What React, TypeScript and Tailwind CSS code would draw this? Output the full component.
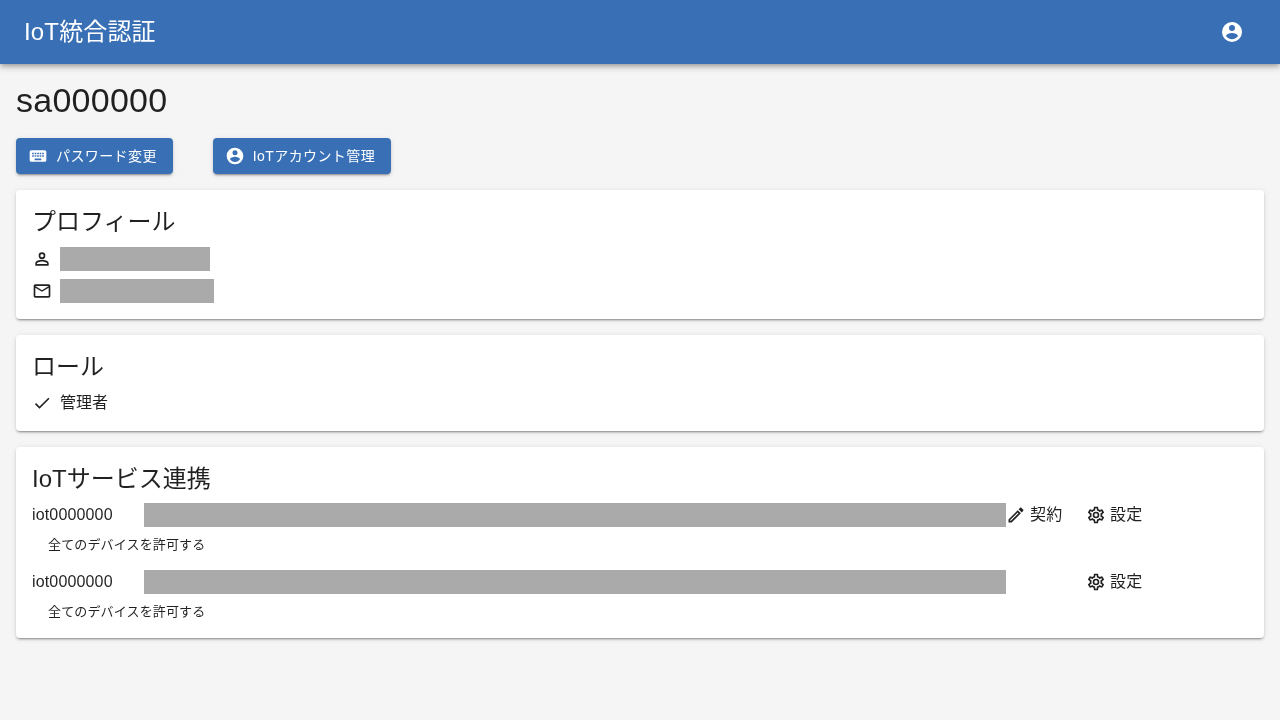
const FONT = "font-['Liberation_Sans','Noto_Sans_CJK_JP',sans-serif]";

const ICONS = {
  accountCircle:
    "M12,19.2C9.5,19.2 7.29,17.92 6,16C6.03,14 10,12.9 12,12.9C14,12.9 17.97,14 18,16C16.71,17.92 14.5,19.2 12,19.2M12,5A3,3 0 0,1 15,8A3,3 0 0,1 12,11A3,3 0 0,1 9,8A3,3 0 0,1 12,5M12,2A10,10 0 0,0 2,12A10,10 0 0,0 12,22A10,10 0 0,0 22,12C22,6.47 17.5,2 12,2Z",
  keyboard:
    "M19,10H17V8H19M19,13H17V11H19M16,10H14V8H16M16,13H14V11H16M16,17H8V15H16M7,10H5V8H7M7,13H5V11H7M8,11H10V13H8M8,8H10V10H8M11,11H13V13H11M11,8H13V10H11M20,5H4C2.89,5 2,5.89 2,7V17A2,2 0 0,0 4,19H20A2,2 0 0,0 22,17V7C22,5.89 21.1,5 20,5Z",
  accountOutline:
    "M12,4A4,4 0 0,1 16,8A4,4 0 0,1 12,12A4,4 0 0,1 8,8A4,4 0 0,1 12,4M12,6A2,2 0 0,0 10,8A2,2 0 0,0 12,10A2,2 0 0,0 14,8A2,2 0 0,0 12,6M12,13C14.67,13 20,14.33 20,17V20H4V17C4,14.33 9.33,13 12,13M12,14.9C9.03,14.9 5.9,16.36 5.9,17V18.1H18.1V17C18.1,16.36 14.97,14.9 12,14.9Z",
  emailOutline:
    "M22 6C22 4.9 21.1 4 20 4H4C2.9 4 2 4.9 2 6V18C2 19.1 2.9 20 4 20H20C21.1 20 22 19.1 22 18V6M20 6L12 11L4 6H20M20 18H4V8L12 13L20 8V18Z",
  check: "M21,7L9,19L3.5,13.5L4.91,12.09L9,16.17L19.59,5.59L21,7Z",
  pencilOutline:
    "M14.06,9L15,9.94L5.92,19H5V18.08L14.06,9M17.66,3C17.41,3 17.15,3.1 16.96,3.29L15.13,5.12L18.88,8.87L20.71,7.04C21.1,6.65 21.1,6 20.71,5.63L18.37,3.29C18.17,3.09 17.92,3 17.66,3M14.06,6.19L3,17.25V21H6.75L17.81,9.94L14.06,6.19Z",
  cogOutline:
    "M12,8A4,4 0 0,1 16,12A4,4 0 0,1 12,16A4,4 0 0,1 8,12A4,4 0 0,1 12,8M12,10A2,2 0 0,0 10,12A2,2 0 0,0 12,14A2,2 0 0,0 14,12A2,2 0 0,0 12,10M10,22C9.75,22 9.54,21.82 9.5,21.58L9.13,18.93C8.5,18.68 7.96,18.34 7.44,17.94L4.95,18.95C4.73,19.03 4.46,18.95 4.34,18.73L2.34,15.27C2.21,15.05 2.27,14.78 2.46,14.63L4.57,12.97L4.5,12L4.57,11L2.46,9.37C2.27,9.22 2.21,8.95 2.34,8.73L4.34,5.27C4.46,5.05 4.73,4.96 4.95,5.05L7.44,6.05C7.96,5.66 8.5,5.32 9.13,5.07L9.5,2.42C9.54,2.18 9.75,2 10,2H14C14.25,2 14.46,2.18 14.5,2.42L14.87,5.07C15.5,5.32 16.04,5.66 16.56,6.05L19.05,5.05C19.27,4.96 19.54,5.05 19.66,5.27L21.66,8.73C21.79,8.95 21.73,9.22 21.54,9.37L19.43,11L19.5,12L19.43,13L21.54,14.63C21.73,14.78 21.79,15.05 21.66,15.27L19.66,18.73C19.54,18.95 19.27,19.04 19.05,18.95L16.56,17.95C16.04,18.34 15.5,18.68 14.87,18.93L14.5,21.58C14.46,21.82 14.25,22 14,22H10M11.25,4L10.88,6.61C9.68,6.86 8.62,7.5 7.85,8.39L5.44,7.35L4.69,8.65L6.8,10.2C6.4,11.37 6.4,12.64 6.8,13.8L4.68,15.36L5.43,16.66L7.86,15.62C8.63,16.5 9.68,17.14 10.87,17.38L11.24,20H12.76L13.13,17.39C14.32,17.14 15.37,16.5 16.14,15.62L18.57,16.66L19.32,15.36L17.2,13.81C17.6,12.64 17.6,11.37 17.2,10.2L19.31,8.65L18.56,7.35L16.15,8.39C15.38,7.5 14.32,6.86 13.13,6.62L12.75,4H11.25Z",
};

const Icon = ({ d, className }: { d: string; className: string }) => (
  <svg viewBox="0 0 24 24" className={className} fill="currentColor">
    <path d={d} />
  </svg>
);

const cardClass =
  "bg-white rounded px-4 pt-4 mt-4 shadow-[0_3px_1px_-2px_rgba(0,0,0,0.2),0_2px_2px_0_rgba(0,0,0,0.14),0_1px_5px_0_rgba(0,0,0,0.12)]";
const btnClass =
  "h-9 flex items-center rounded bg-[#3970b5] text-white text-sm pl-3 pr-4 tracking-[0.4px] shadow-[0_3px_1px_-2px_rgba(0,0,0,0.2),0_2px_2px_0_rgba(0,0,0,0.14),0_1px_5px_0_rgba(0,0,0,0.12)]";

const ServiceRow = ({ contract }: { contract?: boolean }) => (
  <div>
    <div className="h-6 flex items-center text-base tracking-[0.15px]">
      <span className="w-28 shrink-0">iot0000000</span>
      <div className="w-[862px] h-6 bg-[#aaaaaa] shrink-0" />
      <div className="w-[80px] shrink-0 flex items-center">
        {contract && (
          <>
            <Icon d={ICONS.pencilOutline} className="w-5 h-5 mr-1" />
            契約
          </>
        )}
      </div>
      <Icon d={ICONS.cogOutline} className="w-5 h-5 mr-1" />
      設定
    </div>
    <div className="pl-4 mt-2 h-5 leading-5 text-[13px] tracking-[0.15px]">全てのデバイスを許可する</div>
  </div>
);

export default function App() {
  return (
    <div className={`${FONT} antialiased min-h-[720px] bg-[#f5f5f5] text-black/87`}>
      <header className="h-16 flex items-center justify-between bg-[#3970b5] text-white px-6 shadow-[0_2px_4px_-1px_rgba(0,0,0,0.2),0_4px_5px_0_rgba(0,0,0,0.14),0_1px_10px_0_rgba(0,0,0,0.12)]">
        <div className="text-2xl tracking-[0.15px] will-change-transform">IoT統合認証</div>
        <div className="w-12 h-12 flex items-center justify-center">
          <Icon d={ICONS.accountCircle} className="w-6 h-6" />
        </div>
      </header>

      <main className="p-4 will-change-transform">
        <h1 className="text-[34px] leading-10 tracking-[0.25px]">sa000000</h1>

        <div className="flex gap-10 mt-[18px]">
          <button className={btnClass}>
            <Icon d={ICONS.keyboard} className="w-5 h-5 mr-2" />
            パスワード変更
          </button>
          <button className={btnClass}>
            <Icon d={ICONS.accountCircle} className="w-5 h-5 mr-2" />
            IoTアカウント管理
          </button>
        </div>

        <section className={`${cardClass} pb-4`}>
          <h2 className="text-2xl leading-8">プロフィール</h2>
          <div className="mt-[9px] flex flex-col gap-2">
            <div className="flex items-center h-6">
              <Icon d={ICONS.accountOutline} className="w-5 h-5 mr-2" />
              <div className="w-[150px] h-6 bg-[#aaaaaa]" />
            </div>
            <div className="flex items-center h-6">
              <Icon d={ICONS.emailOutline} className="w-5 h-5 mr-2" />
              <div className="w-[154px] h-6 bg-[#aaaaaa]" />
            </div>
          </div>
        </section>

        <section className={`${cardClass} pb-4`}>
          <h2 className="text-2xl leading-8">ロール</h2>
          <div className="mt-2 flex items-center h-6 text-base">
            <Icon d={ICONS.check} className="w-5 h-5 mr-2" />
            管理者
          </div>
        </section>

        <section className={`${cardClass} pb-4`}>
          <h2 className="text-2xl leading-8">IoTサービス連携</h2>
          <div className="mt-2 flex flex-col gap-[15px]">
            <ServiceRow contract />
            <ServiceRow />
          </div>
        </section>
      </main>
    </div>
  );
}
